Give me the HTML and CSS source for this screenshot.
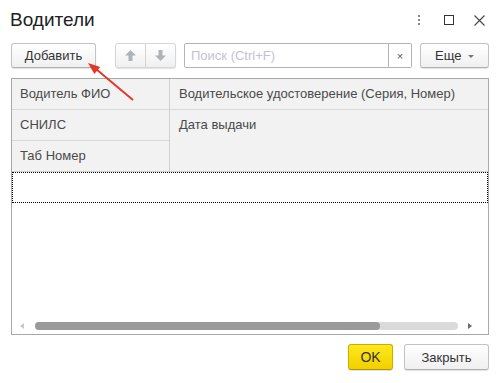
FILE: index.html
```html
<!DOCTYPE html>
<html>
<head>
    <title>Водители</title>
    <link rel="stylesheet" href="styles.css">
</head>
<body>
    <div class="titlebar">
        <h1>Водители</h1>
        <div class="win-icons">
            <span class="win-icon">
                <svg width="4" height="10" viewBox="0 0 4 10"><rect x="1" y="0" width="2" height="2" fill="#888"/><rect x="1" y="4" width="2" height="2" fill="#888"/><rect x="1" y="8" width="2" height="2" fill="#888"/></svg>
            </span>
            <span class="win-icon">
                <svg width="10" height="10" viewBox="0 0 10 10"><rect x="0.5" y="0.5" width="9" height="9" fill="none" stroke="#333"/></svg>
            </span>
            <span class="win-icon">
                <svg width="11" height="11" viewBox="0 0 11 11"><path d="M0.5 0.5 L10.5 10.5 M10.5 0.5 L0.5 10.5" stroke="#444" stroke-width="1.1"/></svg>
            </span>
        </div>
    </div>

    <div class="content">
        <div class="toolbar">
            <button class="btn btn-add">Добавить</button>
            <div class="btn-group">
                <button class="btn btn-arrow">
                    <svg width="11" height="11" viewBox="0 0 11 11"><path d="M5.5 0 L11 5.5 H7.5 V11 H3.5 V5.5 H0 Z" fill="#aeb3b8"/></svg>
                </button>
                <button class="btn btn-arrow">
                    <svg width="11" height="11" viewBox="0 0 11 11"><path d="M5.5 11 L11 5.5 H7.5 V0 H3.5 V5.5 H0 Z" fill="#aeb3b8"/></svg>
                </button>
            </div>
            <div class="search">
                <input type="text" placeholder="Поиск (Ctrl+F)">
                <span class="search-clear">×</span>
            </div>
            <button class="btn btn-more">Еще <span class="caret"></span></button>
        </div>

        <div class="grid">
            <div class="grid-head">
                <div class="col-left">
                    <div class="hcell">Водитель ФИО</div>
                    <div class="hcell">СНИЛС</div>
                    <div class="hcell last">Таб Номер</div>
                </div>
                <div class="col-right">
                    <div class="hcell">Водительское удостоверение (Серия, Номер)</div>
                    <div class="hcell tall last">Дата выдачи</div>
                </div>
            </div>
            <div class="grid-row"></div>
            <div class="grid-fill"></div>
            <div class="hscroll">
                <span class="sc-arrow left"></span>
                <div class="sc-track"><div class="sc-thumb"></div></div>
                <span class="sc-arrow right"></span>
            </div>
        </div>

        <div class="footer">
            <button class="btn btn-ok">OK</button>
            <button class="btn btn-close">Закрыть</button>
        </div>
    </div>

    <!-- pointer drawn over the form -->
    <svg class="pointer" width="140" height="110" viewBox="0 0 140 110">
        <line x1="133" y1="100" x2="96" y2="69" stroke="#e2382c" stroke-width="2"/>
        <polygon points="88,63 100.2,67.1 94.4,74.1" fill="#e2382c"/>
    </svg>
</body>
</html>
```

FILE: styles.css
```css
body {
    margin: 0;
    font-family: "Liberation Sans", Arial, sans-serif;
    font-size: 13px;
    color: #333;
    background: #fff;
    position: relative;
    height: 383px;
}
.titlebar {
    display: flex;
    align-items: center;
    height: 40px;
    padding: 0 5px 0 10px;
}
h1 {
    margin: 0;
    font-size: 19px;
    font-weight: normal;
    color: #222;
}
.win-icons {
    margin-left: auto;
    display: flex;
}
.win-icon {
    width: 30px;
    height: 24px;
    display: flex;
    align-items: center;
    justify-content: center;
}
.content {
    padding: 3px 10px 0 11px;
}
.toolbar {
    display: flex;
    height: 25px;
}
.btn {
    font-family: inherit;
    font-size: 13px;
    color: #333;
    border: 1px solid #c3c3c3;
    border-bottom-color: #b0b0b0;
    border-radius: 3px;
    background: linear-gradient(#ffffff, #f0f0f0);
    box-shadow: 0 1px 1px rgba(0, 0, 0, 0.12);
    padding: 0;
    box-sizing: border-box;
}
.btn-add {
    width: 85px;
    height: 25px;
}
.btn-group {
    display: flex;
    margin-left: 19px;
}
.btn-arrow {
    width: 31px;
    height: 25px;
    display: flex;
    align-items: center;
    justify-content: center;
    border-color: #d6d6d6;
}
.btn-arrow:first-child {
    border-radius: 3px 0 0 3px;
}
.btn-arrow:last-child {
    width: 30px;
    border-left: none;
    border-radius: 0 3px 3px 0;
}
.search {
    display: flex;
    margin-left: 8px;
    height: 25px;
}
.search input {
    width: 205px;
    height: 25px;
    box-sizing: border-box;
    border: 1px solid #b4b4b4;
    border-radius: 2px 0 0 2px;
    padding: 0 6px;
    font-family: inherit;
    font-size: 13px;
    margin: 0;
}
.search input::placeholder {
    color: #c3c3d0;
}
.search-clear {
    width: 23px;
    height: 25px;
    box-sizing: border-box;
    border: 1px solid #b4b4b4;
    border-left: none;
    border-radius: 0 2px 2px 0;
    display: flex;
    align-items: center;
    justify-content: center;
    font-size: 11px;
    color: #555;
}
.btn-more {
    margin-left: 8px;
    width: 69px;
    height: 25px;
}
.caret {
    display: inline-block;
    width: 0;
    height: 0;
    border-left: 3px solid transparent;
    border-right: 3px solid transparent;
    border-top: 3px solid #777;
    vertical-align: middle;
    margin-left: 3px;
}
.grid {
    margin-top: 10px;
    height: 257px;
    box-sizing: border-box;
    border: 1px solid #a8a8a8;
    display: flex;
    flex-direction: column;
}
.grid-head {
    display: flex;
    background: #f2f2f2;
    border-bottom: 1px solid #d0d0d0;
    color: #4a4a4a;
}
.col-left {
    width: 157px;
    border-right: 1px solid #d0d0d0;
}
.col-right {
    flex: 1;
}
.hcell {
    height: 30px;
    line-height: 30px;
    padding-left: 8px;
    border-bottom: 1px solid #d8d8d8;
    white-space: nowrap;
}
.hcell.last {
    border-bottom: none;
}
.col-right .hcell {
    padding-left: 9px;
}
.hcell.tall {
    height: 61px;
}
.grid-row {
    height: 31px;
    box-sizing: border-box;
    border: 1px dotted #000;
}
.grid-fill {
    flex: 1;
}
.hscroll {
    height: 14px;
    display: flex;
    align-items: center;
    padding: 0 0 1px 0;
}
.sc-arrow {
    width: 0;
    height: 0;
    border-top: 3px solid transparent;
    border-bottom: 3px solid transparent;
}
.sc-arrow.left {
    border-right: 4px solid #c8c8c8;
    margin-left: 8px;
}
.sc-arrow.right {
    border-left: 4px solid #6a6a6a;
    margin-right: 16px;
}
.sc-track {
    flex: 1;
    height: 8px;
    margin: 0 10px 0 11px;
    background: #dadada;
    border-radius: 4px;
}
.sc-thumb {
    width: 345px;
    height: 8px;
    background: #9a9a9a;
    border-radius: 4px;
}
.footer {
    display: flex;
    justify-content: flex-end;
    gap: 11px;
    margin-top: 9px;
}
.btn-ok {
    width: 45px;
    height: 26px;
    font-size: 14px;
    background: linear-gradient(#ffe81a, #f2cf00);
    border-color: #c9ad00;
    border-bottom-color: #b09500;
}
.btn-close {
    width: 85px;
    height: 26px;
}
.pointer {
    position: absolute;
    left: 0;
    top: 0;
}
```
